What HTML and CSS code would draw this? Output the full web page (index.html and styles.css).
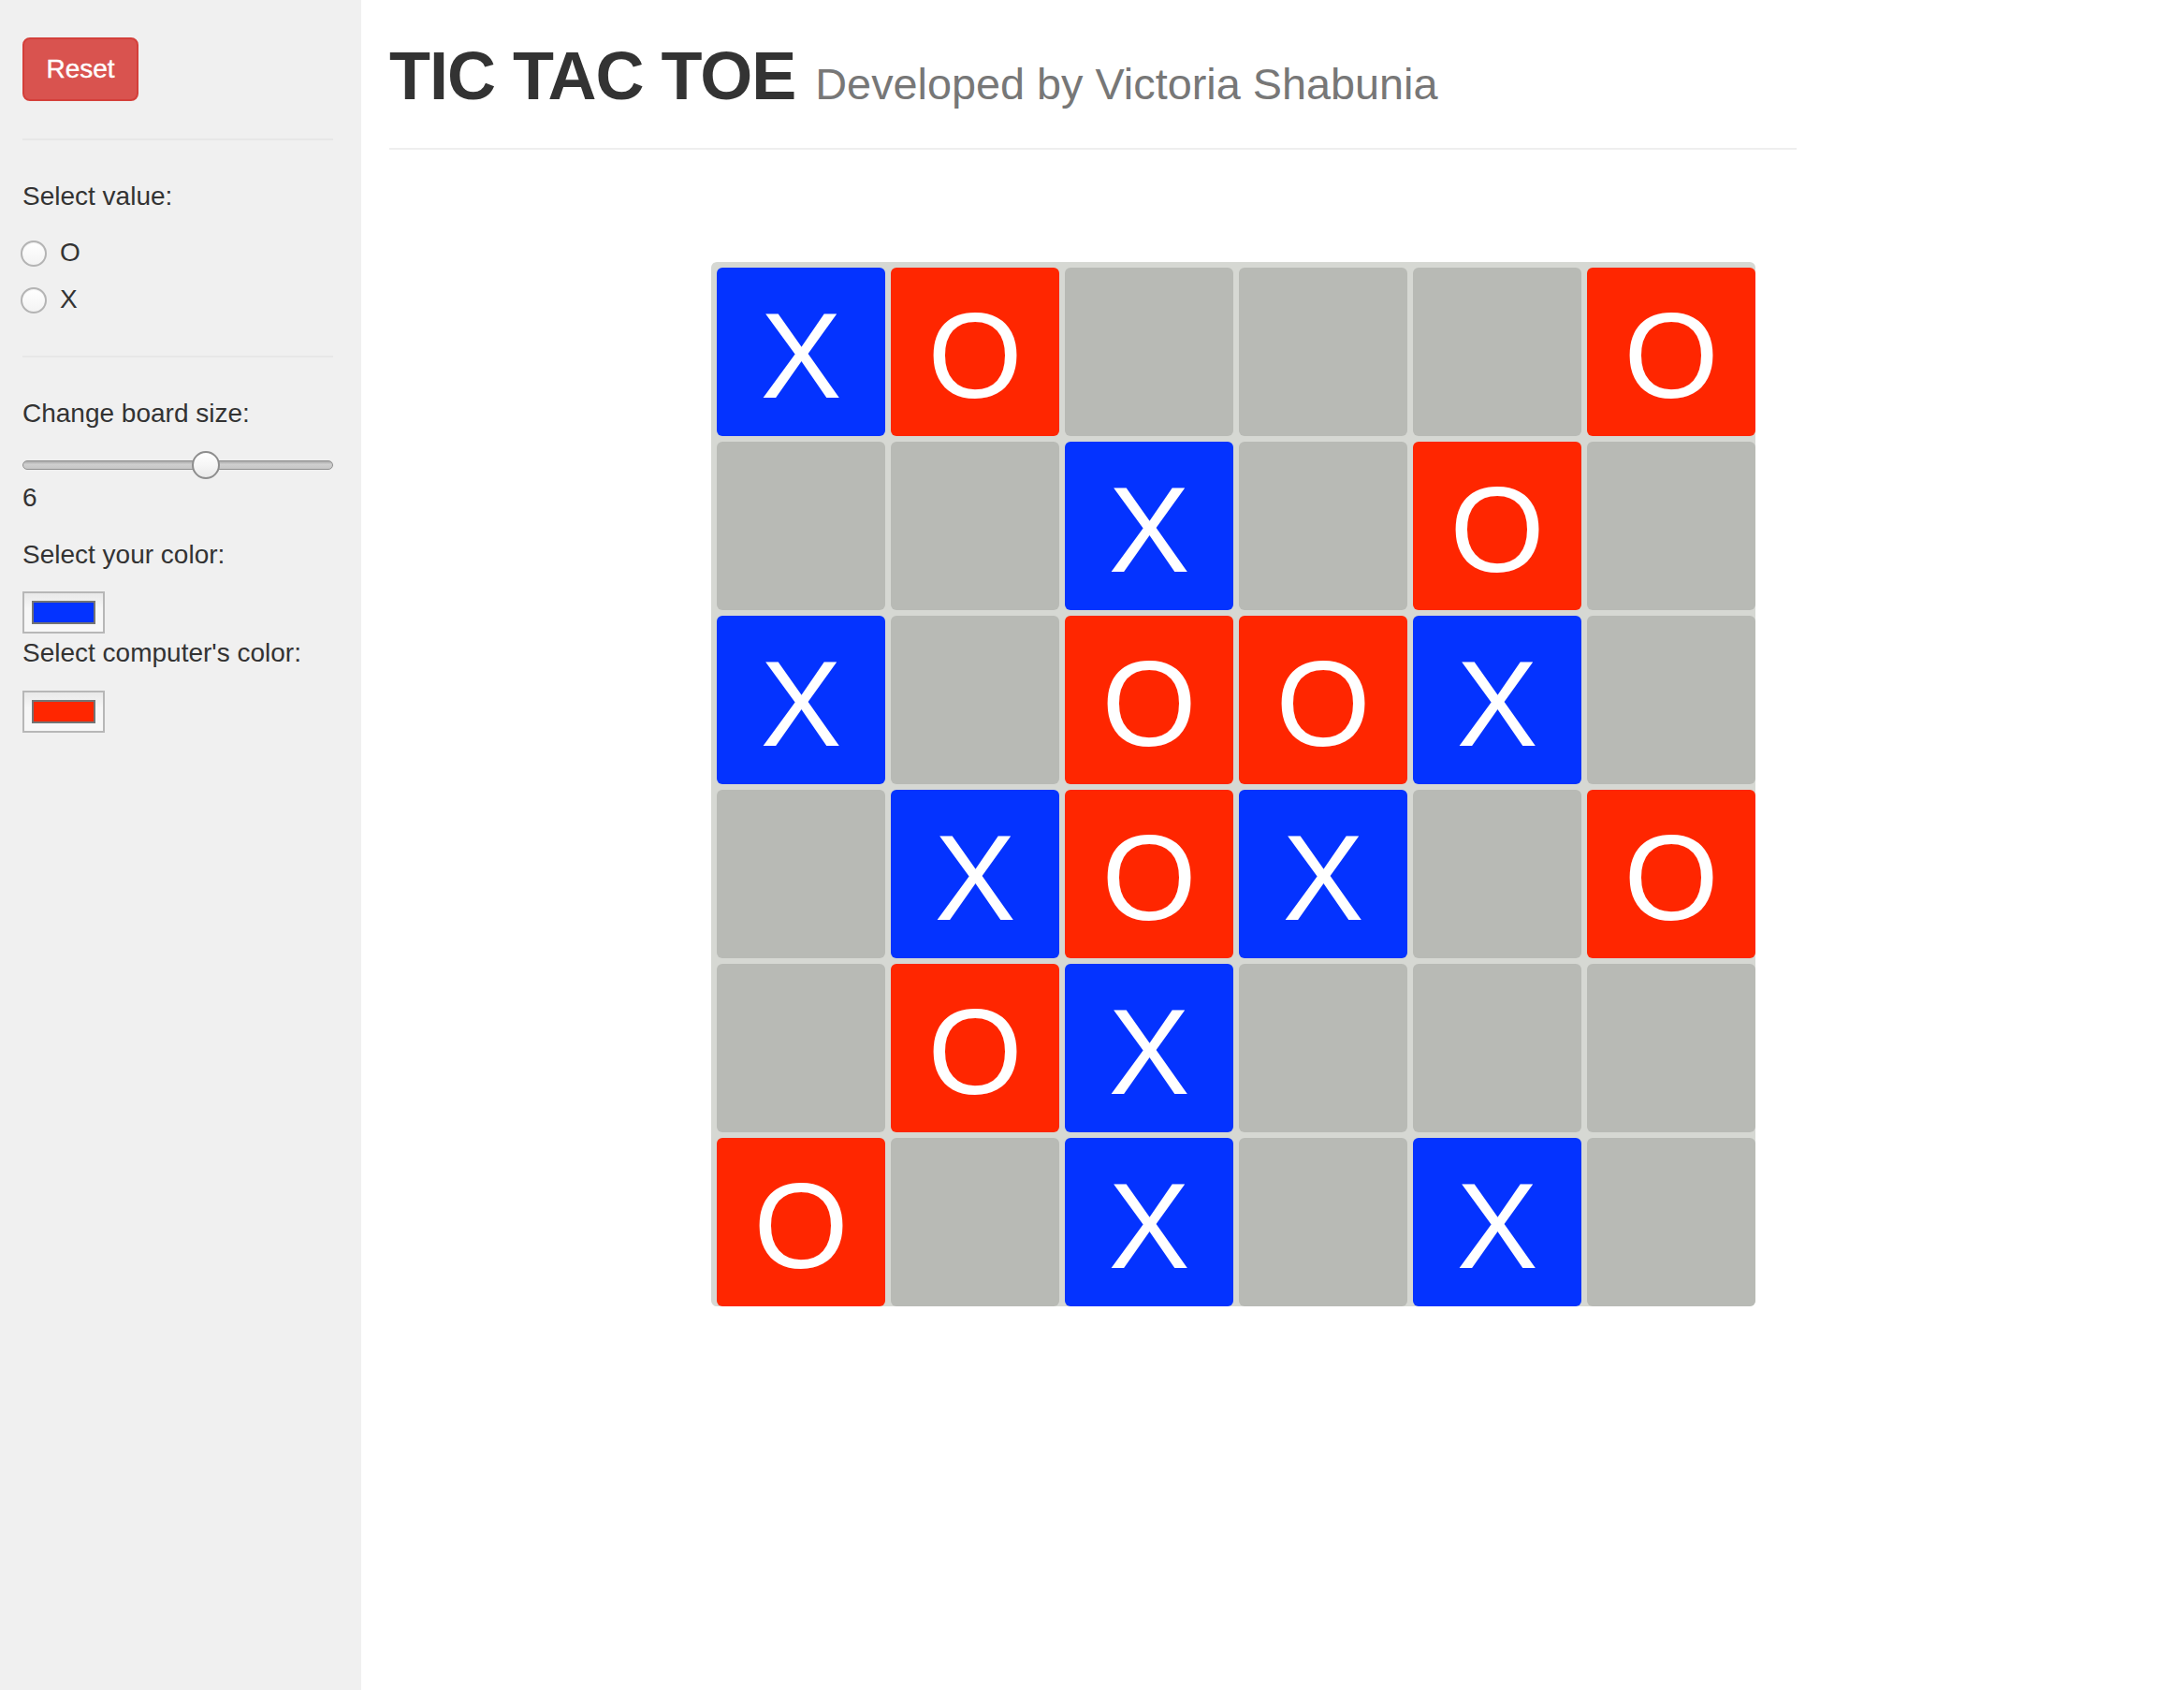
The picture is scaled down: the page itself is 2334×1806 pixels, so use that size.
FILE: index.html
```html
<!DOCTYPE html>
<html lang="en">
<head>
<meta charset="utf-8">
<title>Tic Tac Toe</title>
<link rel="stylesheet" href="styles.css">
</head>
<body>
<div class="page">
  <aside class="sidebar">
    <button class="btn-reset" type="button">Reset</button>
    <hr class="rule">
    <div class="group">
      <div class="label">Select value:</div>
      <label class="radio-row first"><input type="radio" name="val" value="O"><span>O</span></label>
      <label class="radio-row"><input type="radio" name="val" value="X"><span>X</span></label>
    </div>
    <hr class="rule">
    <div class="group">
      <div class="label">Change board size:</div>
      <input class="slider" type="range" min="3" max="8" value="6">
      <div class="value">6</div>
      <div class="label spaced">Select your color:</div>
      <div class="swatch"><span class="swatch-fill blue"></span></div>
      <div class="label lower">Select computer's color:</div>
      <div class="swatch spaced-top"><span class="swatch-fill red"></span></div>
    </div>
  </aside>
  <main class="main">
    <div class="page-header">
      <h1>TIC TAC TOE <small>Developed by Victoria Shabunia</small></h1>
    </div>
    <div class="board">
      <div class="cell x">X</div><div class="cell o">O</div><div class="cell"></div><div class="cell"></div><div class="cell"></div><div class="cell o">O</div>
      <div class="cell"></div><div class="cell"></div><div class="cell x">X</div><div class="cell"></div><div class="cell o">O</div><div class="cell"></div>
      <div class="cell x">X</div><div class="cell"></div><div class="cell o">O</div><div class="cell o">O</div><div class="cell x">X</div><div class="cell"></div>
      <div class="cell"></div><div class="cell x">X</div><div class="cell o">O</div><div class="cell x">X</div><div class="cell"></div><div class="cell o">O</div>
      <div class="cell"></div><div class="cell o">O</div><div class="cell x">X</div><div class="cell"></div><div class="cell"></div><div class="cell"></div>
      <div class="cell o">O</div><div class="cell"></div><div class="cell x">X</div><div class="cell"></div><div class="cell x">X</div><div class="cell"></div>
    </div>
  </main>
</div>
</body>
</html>
```
FILE: styles.css
```css
* { box-sizing: border-box; }
html, body { margin: 0; padding: 0; }
body {
  font-family: "Liberation Sans", Arial, Helvetica, sans-serif;
  font-size: 28px;
  line-height: 40px;
  color: #333;
  background: #fff;
}
.page {
  display: flex;
  min-height: 1806px;
}
.sidebar {
  width: 386px;
  flex: none;
  background: #f0f0f0;
  padding: 40px 30px 0 24px;
}
.btn-reset {
  display: block;
  width: 124px;
  height: 68px;
  padding: 0;
  font-family: inherit;
  font-size: 28px;
  line-height: 64px;
  color: #fff;
  background: #d9534f;
  border: 2px solid #d43f3a;
  border-radius: 8px;
  cursor: pointer;
  -webkit-text-stroke: 0.4px #fff;
}
.rule {
  margin: 40px 0;
  border: 0;
  border-top: 2px solid #e7e7e7;
  height: 0;
}
.label {
  height: 40px;
  white-space: nowrap;
}
.radio-row {
  display: flex;
  align-items: center;
  height: 40px;
  margin-top: 10px;
}
.radio-row.first { margin-top: 20px; }
.radio-row input {
  -webkit-appearance: none;
  appearance: none;
  width: 28px;
  height: 28px;
  margin: 2px 14px 0 -2px;
  border-radius: 50%;
  border: 2px solid #b4b4b4;
  background: linear-gradient(#ffffff, #f3f3f3);
  box-shadow: inset 0 1px 1px rgba(0,0,0,0.06);
}
.slider {
  -webkit-appearance: none;
  appearance: none;
  display: block;
  width: 332px;
  height: 30px;
  margin: 20px 0 0 0;
  padding: 0;
  background: transparent;
}
.slider::-webkit-slider-runnable-track {
  height: 10px;
  border-radius: 5px;
  background: linear-gradient(#a9a9a9, #cfcfcf 40%, #c6c6c6);
  border: 1px solid #8f8f8f;
}
.slider::-webkit-slider-thumb {
  -webkit-appearance: none;
  width: 30px;
  height: 30px;
  margin-top: -11px;
  border-radius: 50%;
  border: 2px solid #8d8d8d;
  background: linear-gradient(#ffffff, #f6f6f6 50%, #e9e9e9);
}
.value {
  height: 40px;
  margin-bottom: 21px;
}
.label.spaced { margin-bottom: 19px; }
.label.lower { margin-top: 1px; }
.swatch {
  width: 88px;
  height: 45px;
  border: 2px solid #b7b7b7;
  background: linear-gradient(#e9e9e9, #f7f7f7 40%, #f7f7f7);
  padding: 8px;
}
.swatch.spaced-top { margin-top: 20px; }
.swatch-fill {
  display: block;
  width: 68px;
  height: 25px;
  border: 2px solid #747474;
}
.swatch-fill.blue { background: #0433ff; }
.swatch-fill.red { background: #ff2600; }
.main {
  width: 1504px;
  margin-left: 30px;
}
.page-header {
  padding-bottom: 18px;
  border-bottom: 2px solid #eeeeee;
}
h1 {
  margin: 42px 0 19px 0;
  font-size: 72px;
  line-height: 79px;
  font-weight: bold;
  letter-spacing: -1px;
  color: #333;
  white-space: nowrap;
}
h1 small {
  font-size: 46.8px;
  font-weight: normal;
  letter-spacing: 0;
  color: #777;
  line-height: 1;
  margin-left: 2px;
}
.board {
  width: 1116px;
  height: 1116px;
  margin: 120px 0 0 344px;
  padding: 6px 0 0 6px;
  background: #d6d8d3;
  border-radius: 6px;
  display: grid;
  grid-template-columns: repeat(6, 180px);
  grid-template-rows: repeat(6, 180px);
  gap: 6px;
}
.cell {
  background: #b8bab5;
  border-radius: 6px;
  color: #fff;
  font-family: "Liberation Sans", Arial, Helvetica, sans-serif;
  font-size: 130px;
  line-height: 188px;
  height: 180px;
  text-align: center;
  overflow: hidden;
}
.cell.x { background: #0433ff; }
.cell.o { background: #ff2600; }
```
